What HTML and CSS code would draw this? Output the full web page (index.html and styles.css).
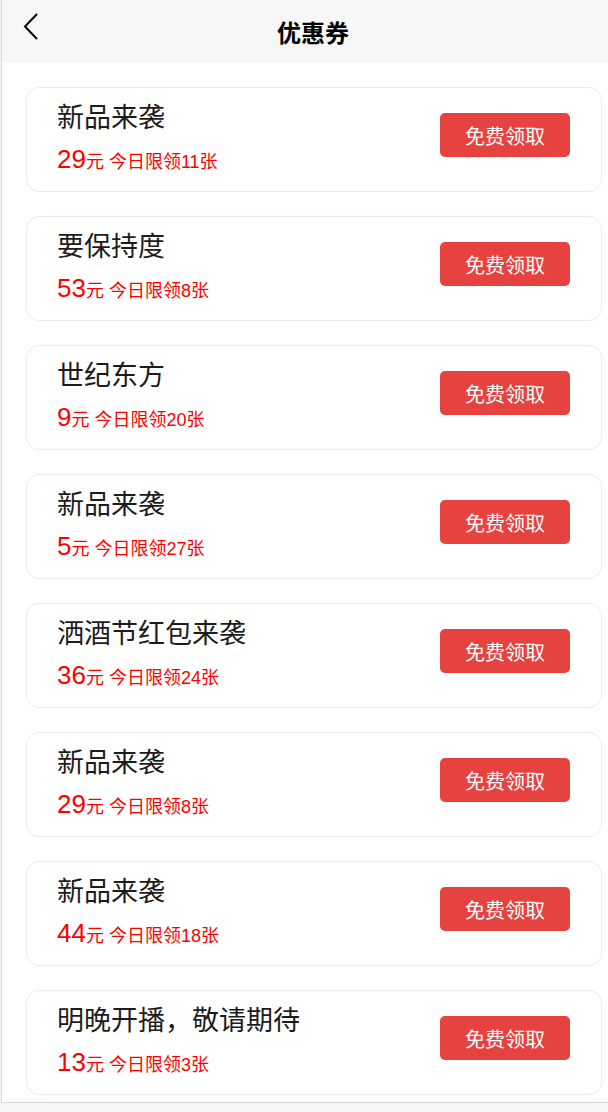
FILE: index.html
```html
<!DOCTYPE html>
<html lang="zh-CN">
<head>
<meta charset="utf-8">
<title>优惠券</title>
<link rel="stylesheet" href="styles.css">
</head>
<body>
<div class="page">
  <header class="topbar">
    <span class="back">
      <svg width="16" height="28" viewBox="0 0 16 28"><polyline points="14,1 2,13.5 14,26" fill="none" stroke="#000" stroke-width="2"/></svg>
    </span>
    <h1 class="title">优惠券</h1>
  </header>
  <main class="list">
    <div class="card">
      <div class="info"><div class="name">新品来袭</div><div class="price"><span class="num">29</span><span class="unit">元</span> <span class="limit">今日限领11张</span></div></div>
      <button class="btn">免费领取</button>
    </div>
    <div class="card">
      <div class="info"><div class="name">要保持度</div><div class="price"><span class="num">53</span><span class="unit">元</span> <span class="limit">今日限领8张</span></div></div>
      <button class="btn">免费领取</button>
    </div>
    <div class="card">
      <div class="info"><div class="name">世纪东方</div><div class="price"><span class="num">9</span><span class="unit">元</span> <span class="limit">今日限领20张</span></div></div>
      <button class="btn">免费领取</button>
    </div>
    <div class="card">
      <div class="info"><div class="name">新品来袭</div><div class="price"><span class="num">5</span><span class="unit">元</span> <span class="limit">今日限领27张</span></div></div>
      <button class="btn">免费领取</button>
    </div>
    <div class="card">
      <div class="info"><div class="name">洒酒节红包来袭</div><div class="price"><span class="num">36</span><span class="unit">元</span> <span class="limit">今日限领24张</span></div></div>
      <button class="btn">免费领取</button>
    </div>
    <div class="card">
      <div class="info"><div class="name">新品来袭</div><div class="price"><span class="num">29</span><span class="unit">元</span> <span class="limit">今日限领8张</span></div></div>
      <button class="btn">免费领取</button>
    </div>
    <div class="card">
      <div class="info"><div class="name">新品来袭</div><div class="price"><span class="num">44</span><span class="unit">元</span> <span class="limit">今日限领18张</span></div></div>
      <button class="btn">免费领取</button>
    </div>
    <div class="card">
      <div class="info"><div class="name">明晚开播，敬请期待</div><div class="price"><span class="num">13</span><span class="unit">元</span> <span class="limit">今日限领3张</span></div></div>
      <button class="btn">免费领取</button>
    </div>
  </main>
</div>
</body>
</html>
```
FILE: styles.css
```css
html, body {
  margin: 0;
  padding: 0;
}
body {
  background: #f5f5f5;
  font-family: "Liberation Sans", "Noto Sans CJK SC", sans-serif;
  overflow: hidden;
}
.page {
  margin-left: 1px;
  width: 606px;
  border-left: 1px solid #d9d9d9;
  border-bottom: 1px solid #d9d9d9;
  background: #fff;
  height: 1102px;
  box-sizing: content-box;
}
.topbar {
  height: 63px;
  background: #f7f7f7;
  display: grid;
  grid-template-columns: auto 1fr;
  align-items: center;
  padding-left: 21px;
}
.back {
  display: flex;
  align-items: center;
  height: 63px;
  padding-bottom: 9px;
  box-sizing: border-box;
}
.title {
  margin: 0;
  text-align: center;
  padding-right: 21px;
  font-size: 24px;
  font-weight: bold;
  color: #000;
  font-family: "Noto Sans CJK SC", sans-serif;
}
.list {
  padding: 24px 6px 0 24px;
  display: flex;
  flex-direction: column;
  gap: 24px;
}
.card {
  height: 105px;
  box-sizing: border-box;
  border: 1px solid #ebebf3;
  border-radius: 13px;
  display: flex;
  justify-content: space-between;
  align-items: flex-start;
  padding: 10px 31px 0 30px;
}
.info {
  display: flex;
  flex-direction: column;
}
.name {
  font-family: "Noto Sans CJK SC", sans-serif;
  font-size: 27px;
  line-height: 36px;
  color: #1c1c1c;
}
.price {
  color: #ff0000;
  line-height: 30px;
  font-size: 18px;
  margin-top: 10px;
}
.num {
  font-size: 26px;
  font-family: "Liberation Sans", sans-serif;
}
.unit, .limit {
  font-size: 18px;
  font-family: "Liberation Sans", "Noto Sans CJK SC", sans-serif;
}
.btn {
  margin-top: 15px;
  width: 130px;
  height: 44px;
  border: none;
  border-radius: 5px;
  background: #e64340;
  color: #fff;
  font-size: 20px;
  font-family: "Noto Sans CJK SC", sans-serif;
  padding: 0;
}
```
